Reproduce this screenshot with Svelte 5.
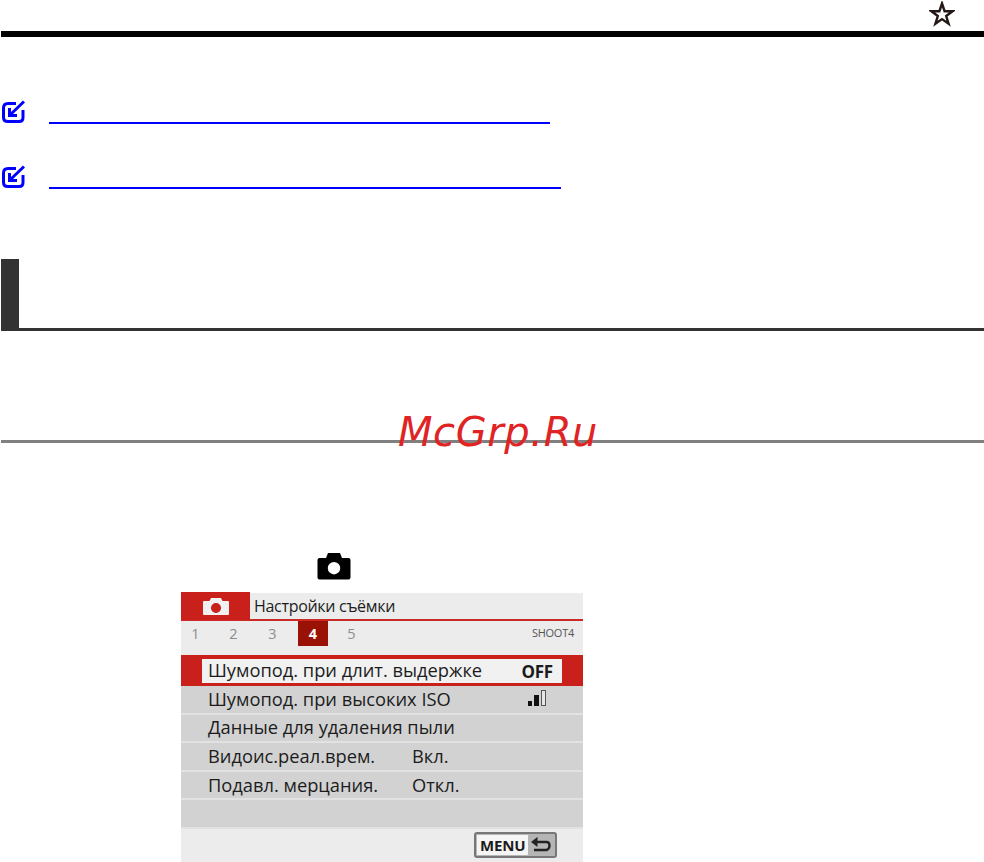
<script>
  const tabs = ['1', '2', '3', '4', '5'];
  const rows = [
    { label: 'Шумопод. при высоких ISO', level: true },
    { label: 'Данные для удаления пыли' },
    { label: 'Видоис.реал.врем.', value: 'Вкл.' },
    { label: 'Подавл. мерцания.', value: 'Откл.' },
    { label: '' }
  ];
</script>

<div class="page">
  <div class="star-row">
    <svg width="26" height="26" viewBox="0 0 26 26" aria-hidden="true">
      <path d="M13 2.5 15.6 10.2H23.6L17.2 15 19.6 22.8 13 18.1 6.4 22.8 8.8 15 2.4 10.2H10.4Z" fill="#fff" stroke="#231815" stroke-width="2.4" stroke-linejoin="miter" />
    </svg>
  </div>
  <div class="top-rule"></div>

  <div class="link-row first">
    <svg class="note" width="24" height="24" viewBox="0 0 24 24" aria-hidden="true">
      <path d="M15 3.500H7Q2.500 3.500 2.500 8V17.500Q2.500 21.500 7 21.500H18Q22 21.500 22 17.500V10" fill="none" stroke="#0000ff" stroke-width="3" />
      <path d="M23 1.500 10 14M8.500 8V15.500H16" fill="none" stroke="#0000ff" stroke-width="3" />
    </svg>
    <span class="link one"></span>
  </div>
  <div class="link-row">
    <svg class="note" width="24" height="24" viewBox="0 0 24 24" aria-hidden="true">
      <path d="M15 3.500H7Q2.500 3.500 2.500 8V17.500Q2.500 21.500 7 21.500H18Q22 21.500 22 17.500V10" fill="none" stroke="#0000ff" stroke-width="3" />
      <path d="M23 1.500 10 14M8.500 8V15.500H16" fill="none" stroke="#0000ff" stroke-width="3" />
    </svg>
    <span class="link two"></span>
  </div>

  <div class="section-head"><div class="block"></div></div>

  <div class="sub-rule">
    <span class="watermark">McGrp.Ru</span>
  </div>

  <div class="cam-row">
    <svg width="34" height="28" viewBox="0 0 34 28" aria-hidden="true">
      <path fill-rule="evenodd" d="M11 1H23L25 6H31.500Q33.500 6 33.500 8V25.500Q33.500 27.500 31.500 27.500H2.500Q0.500 27.500 0.500 25.500V8Q0.500 6 2.500 6H9ZM17 10A6.200 6.200 0 1 0 17 22.400 6.200 6.200 0 1 0 17 10Z" fill="#000" />
    </svg>
  </div>

  <div class="screen">
    <div class="title-bar">
      <div class="cam-tab">
        <svg width="26" height="17" viewBox="0 0 26 17" aria-hidden="true">
          <path fill-rule="evenodd" d="M8 0H18L19.500 3H25Q26 3 26 4V16Q26 17 25 17H1Q0 17 0 16V4Q0 3 1 3H6.500ZM13 5A5 5 0 1 0 13 15 5 5 0 1 0 13 5Z" fill="#f1f1f1" />
          <circle cx="13" cy="10" r="4.500" fill="#c9201c" />
        </svg>
      </div>
      <span class="title">Настройки съёмки</span>
    </div>

    <div class="tab-bar">
      {#each tabs as tab}
        <span class="tab" class:active={tab === '4'}>{tab}</span>
      {/each}
      <span class="shoot">SHOOT4</span>
    </div>

    <div class="selected">
      <div class="selected-box">
        <span class="selected-label">Шумопод. при длит. выдержке</span>
        <b>OFF</b>
      </div>
    </div>

    {#each rows as row}
      <div class="row">
        <span class="label" class:short={row.value}>{row.label}</span>
        {#if row.value}<span>{row.value}</span>{/if}
        {#if row.level}
          <span class="level">
            <i class="b1"></i><i class="b2"></i><i class="b3"></i>
          </span>
        {/if}
      </div>
    {/each}

    <div class="bottom">
      <div class="menu-btn">
        <span class="menu-word">MENU</span>
        <svg width="22" height="16" viewBox="0 0 22 16" aria-hidden="true">
          <path d="M7 5H16.500Q19.500 5 19.500 8.500T16.500 13H4" fill="none" stroke="#222" stroke-width="2.400" />
          <path d="M7.500 0V10L1 5Z" fill="#222" />
        </svg>
      </div>
    </div>
  </div>
</div>

<style>
  :global(body) {
    margin: 0;
    background: #fff;
  }

  .page {
    width: 984px;
    height: 862px;
    overflow: hidden;
    font-family: "Open Sans", "Noto Sans", sans-serif;
  }

  .star-row {
    height: 31px;
    display: flex;
    justify-content: flex-end;
    padding-top: 1px;
    padding-right: 29px;
    box-sizing: border-box;
  }

  .top-rule {
    height: 6px;
    margin-left: 1px;
    background: #000;
  }

  .link-row {
    display: flex;
    align-items: flex-end;
    height: 24px;
    margin-top: 41px;
    padding-left: 1px;
  }

  .link-row.first {
    margin-top: 63px;
  }

  .note {
    flex: none;
  }

  .link {
    height: 2px;
    margin-left: 24px;
    background: #0000ff;
  }

  .link.one {
    width: 501px;
  }

  .link.two {
    width: 512px;
  }

  .section-head {
    height: 72px;
    margin-top: 70px;
    margin-left: 1px;
    border-bottom: 3px solid #333;
    box-sizing: border-box;
  }

  .block {
    width: 18px;
    height: 69px;
    background: #333;
  }

  .sub-rule {
    position: relative;
    height: 3px;
    margin-top: 109px;
    margin-left: 1px;
    background: #808080;
  }

  .watermark {
    position: absolute;
    left: 397px;
    top: -32px;
    font-family: "DejaVu Sans", sans-serif;
    font-style: italic;
    font-size: 40px;
    line-height: 48px;
    letter-spacing: 0.600px;
    color: #e02424;
  }

  .cam-row {
    display: flex;
    height: 28px;
    margin-top: 109px;
    padding-left: 317px;
  }

  .screen {
    width: 402px;
    height: 269px;
    margin-top: 13px;
    margin-left: 181px;
    background: #ececec;
    color: #1c1c1c;
    font-size: 18.300px;
    display: flex;
    flex-direction: column;
  }

  .title-bar {
    display: flex;
    align-items: center;
    height: 28px;
    flex: none;
    box-sizing: border-box;
    border-bottom: 2px solid #cc2a26;
  }

  .cam-tab {
    width: 69px;
    height: 28px;
    flex: none;
    background: #c9201c;
    display: flex;
    align-items: center;
    justify-content: center;
    padding-left: 1px;
    box-sizing: border-box;
  }

  .title {
    margin-left: 4px;
    font-size: 16px;
    letter-spacing: -0.300px;
  }

  .tab-bar {
    display: flex;
    align-items: flex-start;
    height: 34px;
    flex: none;
    box-sizing: border-box;
    color: #8c8c8c;
    font-size: 14.500px;
    background: #ececec;
  }

  .tab {
    width: 39px;
    height: 25px;
    display: flex;
    align-items: center;
    justify-content: center;
    flex: none;
  }

  .tab:first-child {
    width: 29px;
    margin-right: 4px;
  }

  .tab.active {
    width: 30px;
    margin-left: 6px;
    margin-right: 4px;
    background: #9a1206;
    color: #fff;
    font-weight: 700;
  }

  .shoot {
    margin-left: auto;
    margin-right: 9px;
    padding-top: 4px;
    font-size: 11px;
    letter-spacing: -0.250px;
    color: #555;
  }

  .selected {
    height: 31px;
    flex: none;
    box-sizing: border-box;
    padding: 4px 21px 3px 21px;
    background: #c9201c;
  }

  .selected-box {
    height: 24px;
    display: flex;
    align-items: center;
    justify-content: space-between;
    padding: 0 9px 0 6px;
    background: #f1f1f1;
  }

  .selected-label {
    padding-bottom: 3px;
  }

  .selected-box b {
    font-size: 17px;
    letter-spacing: -0.200px;
  }

  .row {
    height: 28.600px;
    flex: none;
    display: flex;
    align-items: center;
    padding-left: 27px;
    padding-bottom: 2px;
    box-sizing: border-box;
    background: #d2d2d2;
    border-bottom: 2px solid #e2e2e2;
  }

  .label {
    white-space: nowrap;
  }

  .label.short {
    width: 204px;
  }

  .level {
    display: flex;
    align-items: flex-end;
    gap: 2px;
    height: 16px;
    margin-left: 77px;
  }

  .level i {
    display: block;
    width: 4px;
    background: #111;
  }

  .level .b1 {
    height: 5px;
  }

  .level .b2 {
    width: 5px;
    height: 11px;
  }

  .level .b3 {
    height: 16px;
    width: 5px;
    box-sizing: border-box;
    background: #e6e6e6;
    border: 1px solid #555;
  }

  .bottom {
    flex: 1;
    display: flex;
    align-items: center;
    justify-content: flex-end;
    padding-right: 26px;
    background: #ececec;
  }

  .menu-btn {
    display: flex;
    align-items: center;
    gap: 2px;
    width: 83px;
    height: 26px;
    box-sizing: border-box;
    border: 2px solid #777;
    border-radius: 3px;
    padding: 1px;
    background: #b5b5b5;
  }

  .menu-word {
    background: #f5f5f5;
    font-weight: 700;
    font-size: 15px;
    line-height: 20px;
    padding: 0 3px;
    letter-spacing: -0.200px;
  }
</style>
